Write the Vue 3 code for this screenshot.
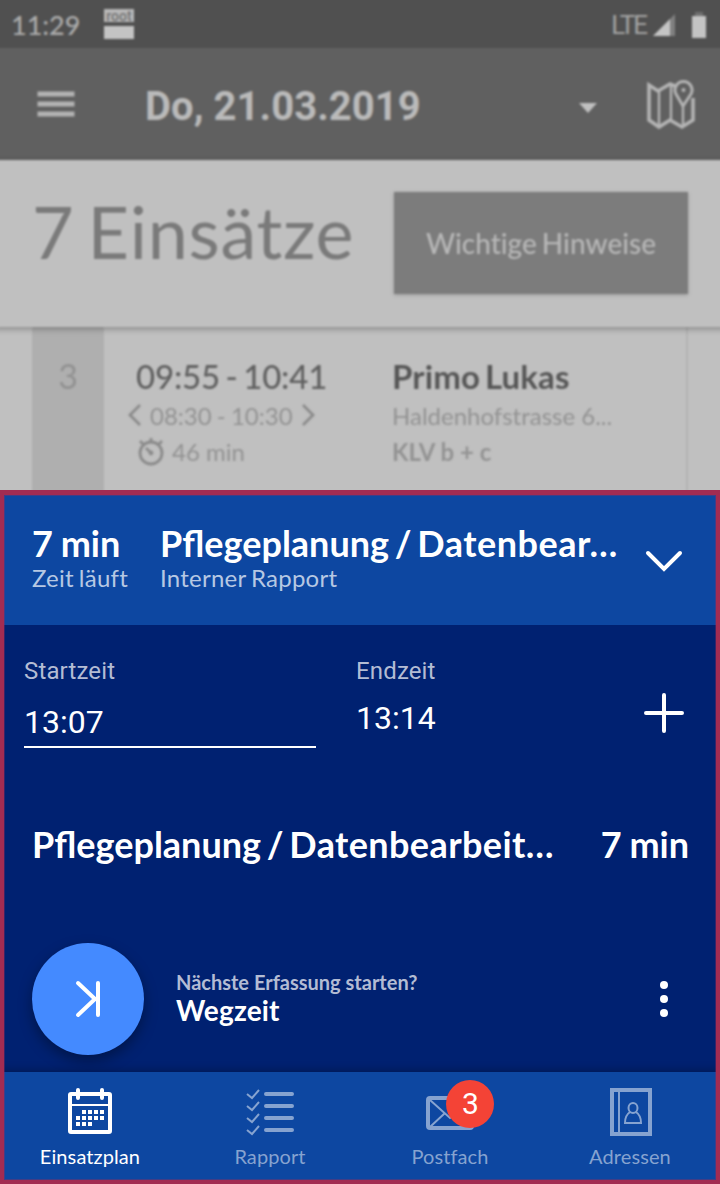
<template>
  <main class="app">
    <div class="backdrop">
      <div class="day">
        <header class="statusbar">
          <span class="clock">11:29</span>
          <div class="root-badge">
            <span class="root-badge__text">root</span>
            <span class="root-badge__bar"></span>
          </div>
          <span class="network">LTE</span>
          <svg class="signal" width="24" height="24" viewBox="0 0 24 24">
            <path d="M1 23 23 1v22z" fill="#808080" />
            <path d="M1 23 18 6v17z" fill="#c4c4c4" />
          </svg>
          <svg class="battery" width="16" height="28" viewBox="0 0 16 28">
            <path d="M4 0h8v4H4z" fill="#707070" />
            <path d="M1 4h14v22H1z" fill="#c4c4c4" />
          </svg>
        </header>

        <nav class="toolbar">
          <svg class="menu" width="38" height="28" viewBox="0 0 38 28">
            <path d="M0.500 4h37M0.500 14h37M0.500 24h37" stroke="#b4b4b4" stroke-width="5" />
          </svg>
          <span class="date">Do, 21.03.2019</span>
          <svg class="caret" width="18" height="12" viewBox="0 0 18 12">
            <path d="M0 1h18L9 11z" fill="#c0c0c0" />
          </svg>
          <svg class="map" width="50" height="52" viewBox="0 0 50 52" fill="none" stroke="#b4b4b4">
            <path d="M29 7 24 5 12 12 3 6v35l10 7 11-7 12 7 11-7V19" stroke-width="3.6" />
            <path d="M13 12v35M25 6v34M37 27v20" stroke-width="2.4" />
            <path d="M37 27 30 15a8.5 8.5 0 1 1 15 0z" stroke-width="3" />
            <circle cx="37.500" cy="11" r="2" fill="#b4b4b4" stroke="none" />
          </svg>
        </nav>

        <section class="summary">
          <h1 class="summary__title">7 Einsätze</h1>
          <button class="summary__button">Wichtige Hinweise</button>
        </section>

        <article class="visit">
          <div class="visit__number">3</div>
          <div class="visit__time">
            <div class="visit__range">09:55 - 10:41</div>
            <div class="visit__window">
              <svg width="14" height="24" viewBox="0 0 14 24"><path d="M12 2 2 12l10 10" /></svg>
              <span>08:30 - 10:30</span>
              <svg width="14" height="24" viewBox="0 0 14 24"><path d="m2 2 10 10L2 22" /></svg>
            </div>
            <div class="visit__duration">
              <svg width="26" height="30" viewBox="0 0 26 30">
                <circle cx="13" cy="17" r="11" />
                <path d="M13 2v4M2 5l3 3M24 5l-3 3M8 12l5 5" />
                <circle cx="13" cy="17" r="1" />
              </svg>
              <span>46 min</span>
            </div>
          </div>
          <div class="visit__client">
            <div class="visit__name">Primo Lukas</div>
            <div class="visit__street">Haldenhofstrasse 6...</div>
            <div class="visit__service">KLV b + c</div>
          </div>
        </article>
      </div>
    </div>

    <section class="tracker">
      <header class="current">
        <div class="current__time">
          <div class="current__title">7 min</div>
          <div class="current__sub">Zeit läuft</div>
        </div>
        <div class="current__task">
          <div class="current__title current__title--task">Pflegeplanung / <span class="stretch">Datenbear…</span></div>
          <div class="current__sub">Interner Rapport</div>
        </div>
        <svg class="current__chevron" width="40" height="24" viewBox="0 0 40 24">
          <path d="m4 3 16 16L36 3" />
        </svg>
      </header>

      <div class="body">
        <div class="fields">
          <label class="field field--start">
            <span class="field__label">Startzeit</span>
            <span class="field__value">13:07</span>
          </label>
          <label class="field field--end">
            <span class="field__label">Endzeit</span>
            <span class="field__value">13:14</span>
          </label>
          <svg class="plus" width="40" height="40" viewBox="0 0 40 40">
            <path d="M20 2v36M2 20h36" />
          </svg>
        </div>

        <div class="entry">
          <span class="entry__name">Pflegeplanung / <span class="stretch">Datenbearbeit…</span></span>
          <span>7 min</span>
        </div>

        <div class="next">
          <button class="next__button">
            <svg width="28" height="40" viewBox="0 0 28 40">
              <path d="m4 4 17 16L4 36M24 4v32" />
            </svg>
          </button>
          <div class="next__text">
            <div class="next__question">Nächste Erfassung starten?</div>
            <div class="next__task">Wegzeit</div>
          </div>
          <svg class="next__more" width="8" height="36" viewBox="0 0 8 36">
            <circle cx="4" cy="4" r="4" />
            <circle cx="4" cy="18" r="4" />
            <circle cx="4" cy="32" r="4" />
          </svg>
        </div>
      </div>

      <nav class="tabs">
        <a v-for="tab in tabs" :key="tab.id" class="tab" :class="{ active: tab.id === activeTab }" @click="activeTab = tab.id">
          <svg v-if="tab.id === 'plan'" class="tab__icon" width="48" height="48" viewBox="0 0 48 48">
            <rect x="4" y="6" width="40" height="38" rx="1" stroke-width="4" />
            <path d="M4 17h40" stroke-width="2" />
            <path d="M12 2v8M36 2v8" stroke-width="4" stroke-linecap="round" />
            <path d="M16 24h24M10 30h30M10 36h18" stroke-width="4" stroke-dasharray="4 2" />
          </svg>
          <svg v-else-if="tab.id === 'report'" class="tab__icon" width="48" height="48" viewBox="0 0 48 48">
            <path v-for="y in [6, 18, 30, 42]" :key="y" :d="`M1 ${y}l5 4 7-8`" stroke-width="2" />
            <path d="M20 6h26M20 18h26M20 30h26M20 42h26" stroke-width="4" stroke-linecap="round" />
          </svg>
          <svg v-else-if="tab.id === 'mail'" class="tab__icon" width="48" height="48" viewBox="0 0 48 48">
            <rect x="2" y="10" width="44" height="30" rx="2" stroke-width="4" />
            <path d="m4 12 20 18 20-18M4 39l15-14M44 39 29 25" stroke-width="2" />
          </svg>
          <svg v-else class="tab__icon" width="48" height="48" viewBox="0 0 48 48">
            <rect x="6" y="2" width="38" height="44" stroke-width="4" />
            <path d="M13 3v42" stroke-width="2" />
            <ellipse cx="27" cy="20" rx="4.500" ry="5" stroke-width="2" />
            <path d="M24 24c-3 2-5 5-5 11h16c0-6-2-9-5-11" stroke-width="2" />
          </svg>
          <span v-if="tab.badge" class="tab__badge">{{ tab.badge }}</span>
          <span class="tab__label">{{ tab.label }}</span>
        </a>
      </nav>
    </section>
  </main>
</template>

<script setup>
import { ref } from 'vue'

const tabs = [
  { id: 'plan', label: 'Einsatzplan' },
  { id: 'report', label: 'Rapport' },
  { id: 'mail', label: 'Postfach', badge: 3 },
  { id: 'contacts', label: 'Adressen' },
]

const activeTab = ref('plan')
</script>

<style>
body {
  margin: 0;
}
</style>

<style scoped>
.app {
  width: 720px;
  height: 1184px;
  overflow: hidden;
  font-family: Lato, sans-serif;
  background: #c0c0c0;
}

svg {
  display: block;
  flex-shrink: 0;
}

/* Tagesansicht im Hintergrund */
.backdrop {
  height: 490px;
  overflow: hidden;
}

/* etwas breiter als das Fenster, damit die Unschärfe am Rand nicht ausläuft */
.day {
  margin: -6px -6px 0;
  filter: blur(1.2px);
}

.statusbar {
  display: flex;
  box-sizing: border-box;
  height: 54px;
  padding: 6px 18px 0 17px;
  background: #505050;
}

.clock {
  width: 93px;
  font-size: 27px;
  line-height: 49px;
  font-weight: 500;
  color: #acacac;
}

.root-badge {
  display: flex;
  flex-direction: column;
  gap: 4px;
  width: 30px;
  margin-top: 9px;
}

.root-badge__text {
  height: 13px;
  font: 500 14px/14px Roboto, sans-serif;
  text-align: center;
  color: #747474;
  background: #b8b8b8;
}

.root-badge__bar {
  height: 13px;
  background: #c4c4c4;
}

.network {
  margin-left: auto;
  font: 26px/50px Roboto, sans-serif;
  letter-spacing: -2px;
  color: #a4a4a4;
}

.signal {
  margin: 13px 0 0 6px;
}

.battery {
  margin: 12px 1px 0 15px;
}

.toolbar {
  display: flex;
  align-items: center;
  height: 112px;
  padding: 0 30px 0 43px;
  background: #606060;
}

.date {
  margin-left: 70px;
  padding-top: 6px;
  font: 700 40px/48px Roboto, sans-serif;
  letter-spacing: 0.05px;
  color: #bababa;
}

.caret {
  margin: 8px 0 0 auto;
}

.map {
  margin: 2px 0 0 49px;
}

.summary {
  position: relative;
  z-index: 1;
  display: flex;
  justify-content: space-between;
  align-items: flex-start;
  box-sizing: border-box;
  height: 167px;
  padding: 31px 38px 0;
  background: #c0c0c0;
  box-shadow: 0 2px 6px rgba(0, 0, 0, 0.3);
}

.summary__title {
  margin: 0;
  font-size: 72px;
  line-height: 80px;
  font-weight: 400;
  letter-spacing: 0.7px;
  word-spacing: -6px;
  color: #7a7a7a;
}

.summary__button {
  width: 294px;
  height: 102px;
  margin-top: 1px;
  padding: 0 0 1px;
  border: 0;
  font: 500 28px Lato, sans-serif;
  word-spacing: -2px;
  font-variant-ligatures: none;
  color: #b8b8b8;
  background: #7c7c7c;
  box-shadow: 0 1px 4px rgba(0, 0, 0, 0.2);
}

.visit {
  display: flex;
  height: 170px;
  margin: 0 38px;
  border-right: 2px solid #b3b3b3;
  color: #929292;
}

.visit__number {
  width: 72px;
  padding-top: 28px;
  font-size: 34px;
  line-height: 42px;
  text-align: center;
  background: #afafaf;
}

.visit__time {
  width: 256px;
  padding: 28px 0 0 32px;
}

.visit__range,
.visit__name {
  font-size: 33px;
  line-height: 42px;
  color: #606060;
}

.visit__range {
  font-weight: 500;
  letter-spacing: -0.2px;
  word-spacing: -2.5px;
}

.visit__window,
.visit__duration {
  display: flex;
  align-items: center;
  height: 36px;
  font-size: 24px;
}

.visit__window {
  gap: 8px;
  margin-left: -8px;
  word-spacing: -1px;
}

.visit__duration {
  gap: 8px;
  margin-left: 2px;
}

.visit svg {
  fill: none;
  stroke: #8a8a8a;
  stroke-width: 2.8;
}

.visit__client {
  padding-top: 28px;
}

.visit__name {
  margin-bottom: 1px;
  font-weight: 700;
  letter-spacing: 0.1px;
  word-spacing: -3px;
  color: #565656;
}

.visit__street,
.visit__service {
  font-size: 24px;
  line-height: 36px;
}

.visit__service {
  font-weight: 700;
}

/* Laufende Zeiterfassung */
.tracker {
  position: relative;
  height: 694px;
  color: #fff;
}

.tracker::after {
  content: '';
  position: absolute;
  inset: 0;
  z-index: 2;
  border: 4px solid #a22c52;
  border-top-width: 5px;
  box-shadow: inset 0 0 0 1px rgba(162, 44, 82, 0.35);
  pointer-events: none;
}

.current {
  display: flex;
  box-sizing: border-box;
  height: 135px;
  padding: 31px 36px 0 32px;
  background: #0d47a1;
}

.current__time {
  width: 128px;
}

.current__title {
  font-size: 36px;
  line-height: 44px;
  font-weight: 700;
  word-spacing: -1px;
  white-space: nowrap;
}

.current__title--task,
.entry__name {
  word-spacing: -3px;
}

.stretch {
  letter-spacing: 0.5px;
}

.current__sub {
  font-size: 24px;
  line-height: 25px;
  letter-spacing: 0.25px;
  word-spacing: -1.5px;
  color: #b6c8e3;
}

.current__chevron {
  margin: 29px 0 0 auto;
}

.current__chevron,
.plus,
.next__button svg {
  fill: none;
  stroke: #fff;
  stroke-width: 4;
  stroke-linecap: round;
}

.body {
  height: 447px;
  background: #002171;
}

.fields {
  display: flex;
  height: 123px;
  padding: 32px 36px 0 24px;
  font-family: Roboto, sans-serif;
}

.field {
  display: flex;
  flex-direction: column;
  box-sizing: border-box;
}

.field--start {
  width: 292px;
  height: 91px;
  border-bottom: 2px solid #fff;
}

.field--end {
  margin-left: 40px;
}

.field__label {
  font-size: 24px;
  line-height: 28px;
  letter-spacing: 0.15px;
  color: #b3bcd4;
}

.field__value {
  margin-top: 17px;
  font-size: 32px;
  line-height: 40px;
}

.field--end .field__value {
  margin-top: 13px;
}

.plus {
  margin: 36px 0 0 auto;
}

.entry {
  display: flex;
  justify-content: space-between;
  padding: 42px 31px 0 32px;
  font-size: 36px;
  line-height: 44px;
  font-weight: 700;
  word-spacing: -1px;
}

.entry .stretch {
  letter-spacing: 0.4px;
}

.next {
  display: flex;
  align-items: center;
  height: 112px;
  padding: 0 52px 0 32px;
  margin-top: 77px;
}

.next__button {
  display: flex;
  align-items: center;
  justify-content: center;
  width: 112px;
  height: 112px;
  padding: 0;
  border: 0;
  border-radius: 50%;
  background: #448aff;
  box-shadow: 0 6px 14px rgba(0, 0, 0, 0.35);
}

.next__text {
  margin: -2px 0 0 32px;
}

.next__question {
  font-size: 20px;
  line-height: 24px;
  font-weight: 700;
  color: #b3bcd4;
}

.next__task {
  font-size: 28px;
  line-height: 32px;
  font-weight: 700;
  letter-spacing: 0.15px;
}

.next__more {
  margin-left: auto;
  fill: #fff;
}

.tabs {
  position: relative;
  display: flex;
  height: 112px;
  background: #0d47a1;
  box-shadow: 0 -2px 8px rgba(0, 0, 0, 0.25);
}

.tab {
  position: relative;
  display: flex;
  flex: 1;
  flex-direction: column;
  align-items: center;
  padding-top: 16px;
  color: #86a3d0;
}

.tab.active {
  color: #fff;
}

.tab__icon {
  fill: none;
  stroke: currentColor;
}

.tab__label {
  margin-top: 8px;
  font-size: 20px;
  line-height: 24px;
  letter-spacing: 0.1px;
}

.tab__badge {
  position: absolute;
  top: 8px;
  left: 86px;
  width: 48px;
  height: 48px;
  border-radius: 50%;
  font: 30px/48px Roboto, sans-serif;
  text-align: center;
  text-indent: 1px;
  color: #fff;
  background: #f44336;
}
</style>
